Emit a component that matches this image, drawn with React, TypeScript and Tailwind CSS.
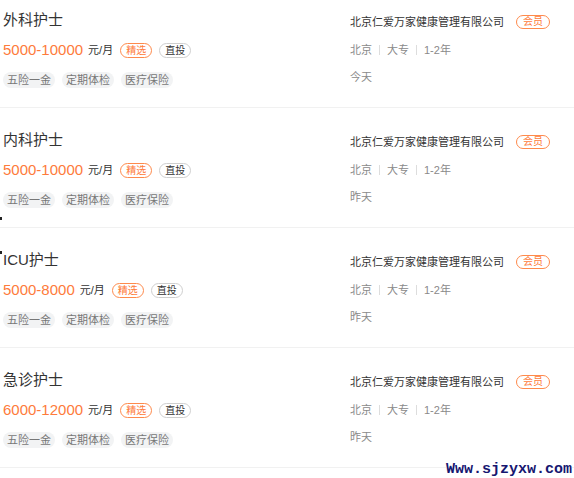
import React from "react";

type Job = { title: string; salary: string; date: string };

const jobs: Job[] = [
  { title: "外科护士", salary: "5000-10000", date: "今天" },
  { title: "内科护士", salary: "5000-10000", date: "昨天" },
  { title: "ICU护士", salary: "5000-8000", date: "昨天" },
  { title: "急诊护士", salary: "6000-12000", date: "昨天" },
];

const font = {
  fontFamily: '"Liberation Sans", "Noto Sans CJK SC", sans-serif',
};

function Card({ job }: { job: Job }) {
  return (
    <div className="flex border-b border-[#f1f1f1] h-[120px]">
      <div className="w-[350px] flex-none pl-[3px] pt-[20px] flex flex-col">
        <div className="h-[24px] leading-[24px] text-[15px] text-[#333]">{job.title}</div>
        <div className="mt-[8px] h-[20px] flex items-center">
          <span className="text-[15px] leading-[20px] text-[#fe7b3b]">{job.salary}</span>
          <span className="ml-[5px] text-[11px] leading-[20px] text-[#333]">元/月</span>
          <span className="ml-[7px] h-[15px] px-[5px] rounded-full border border-[#fe8a4c] text-[#fe7b3b] text-[10px] leading-[13px] flex items-center">
            精选
          </span>
          <span className="ml-[7px] h-[15px] px-[5px] rounded-full border border-[#cfcfcf] text-[#333] text-[10px] leading-[13px] flex items-center">
            直投
          </span>
        </div>
        <div className="mt-[12px] h-[16px] flex gap-[7px]">
          {["五险一金", "定期体检", "医疗保险"].map((t) => (
            <span
              key={t}
              className="h-[16px] px-[4px] rounded-full bg-[#f2f3f4] text-[#777] text-[11px] leading-[16px]"
            >
              {t}
            </span>
          ))}
        </div>
      </div>
      <div className="flex-1 pt-[24px] flex flex-col">
        <div className="h-[20px] flex items-center">
          <span className="text-[11px] leading-[20px] text-[#333]">北京仁爱万家健康管理有限公司</span>
          <span className="ml-[12px] h-[14px] px-[6px] rounded-full border border-[#fe8a4c] text-[#fe7b3b] text-[10px] leading-[12px] flex items-center">
            会员
          </span>
        </div>
        <div className="mt-[8px] h-[20px] flex items-center text-[11px] text-[#8a8a8a]">
          <span>北京</span>
          <span className="mx-[7px] w-px h-[10px] bg-[#dddddd]" />
          <span>大专</span>
          <span className="mx-[7px] w-px h-[10px] bg-[#dddddd]" />
          <span>1-2年</span>
        </div>
        <div className="mt-[7px] h-[20px] leading-[20px] text-[11px] text-[#8a8a8a]">{job.date}</div>
      </div>
    </div>
  );
}

export default function App() {
  return (
    <div className="relative w-[574px] h-[478px] overflow-hidden bg-white" style={font}>
      <div className="mt-[-12px]">
        {jobs.map((j) => (
          <Card key={j.title} job={j} />
        ))}
      </div>
      <span className="absolute left-0 top-[217px] w-[2px] h-[3px] bg-[#222]" />
      <span className="absolute left-0 top-[251px] w-[2px] h-[3px] bg-[#222]" />
      <div
        className="absolute right-[2px] top-[461px] h-[17px] bg-white text-[15px] leading-[17px] font-bold text-[#161670]"
        style={{ fontFamily: '"Liberation Mono", monospace' }}
      >
        Www.sjzyxw.com
      </div>
    </div>
  );
}
